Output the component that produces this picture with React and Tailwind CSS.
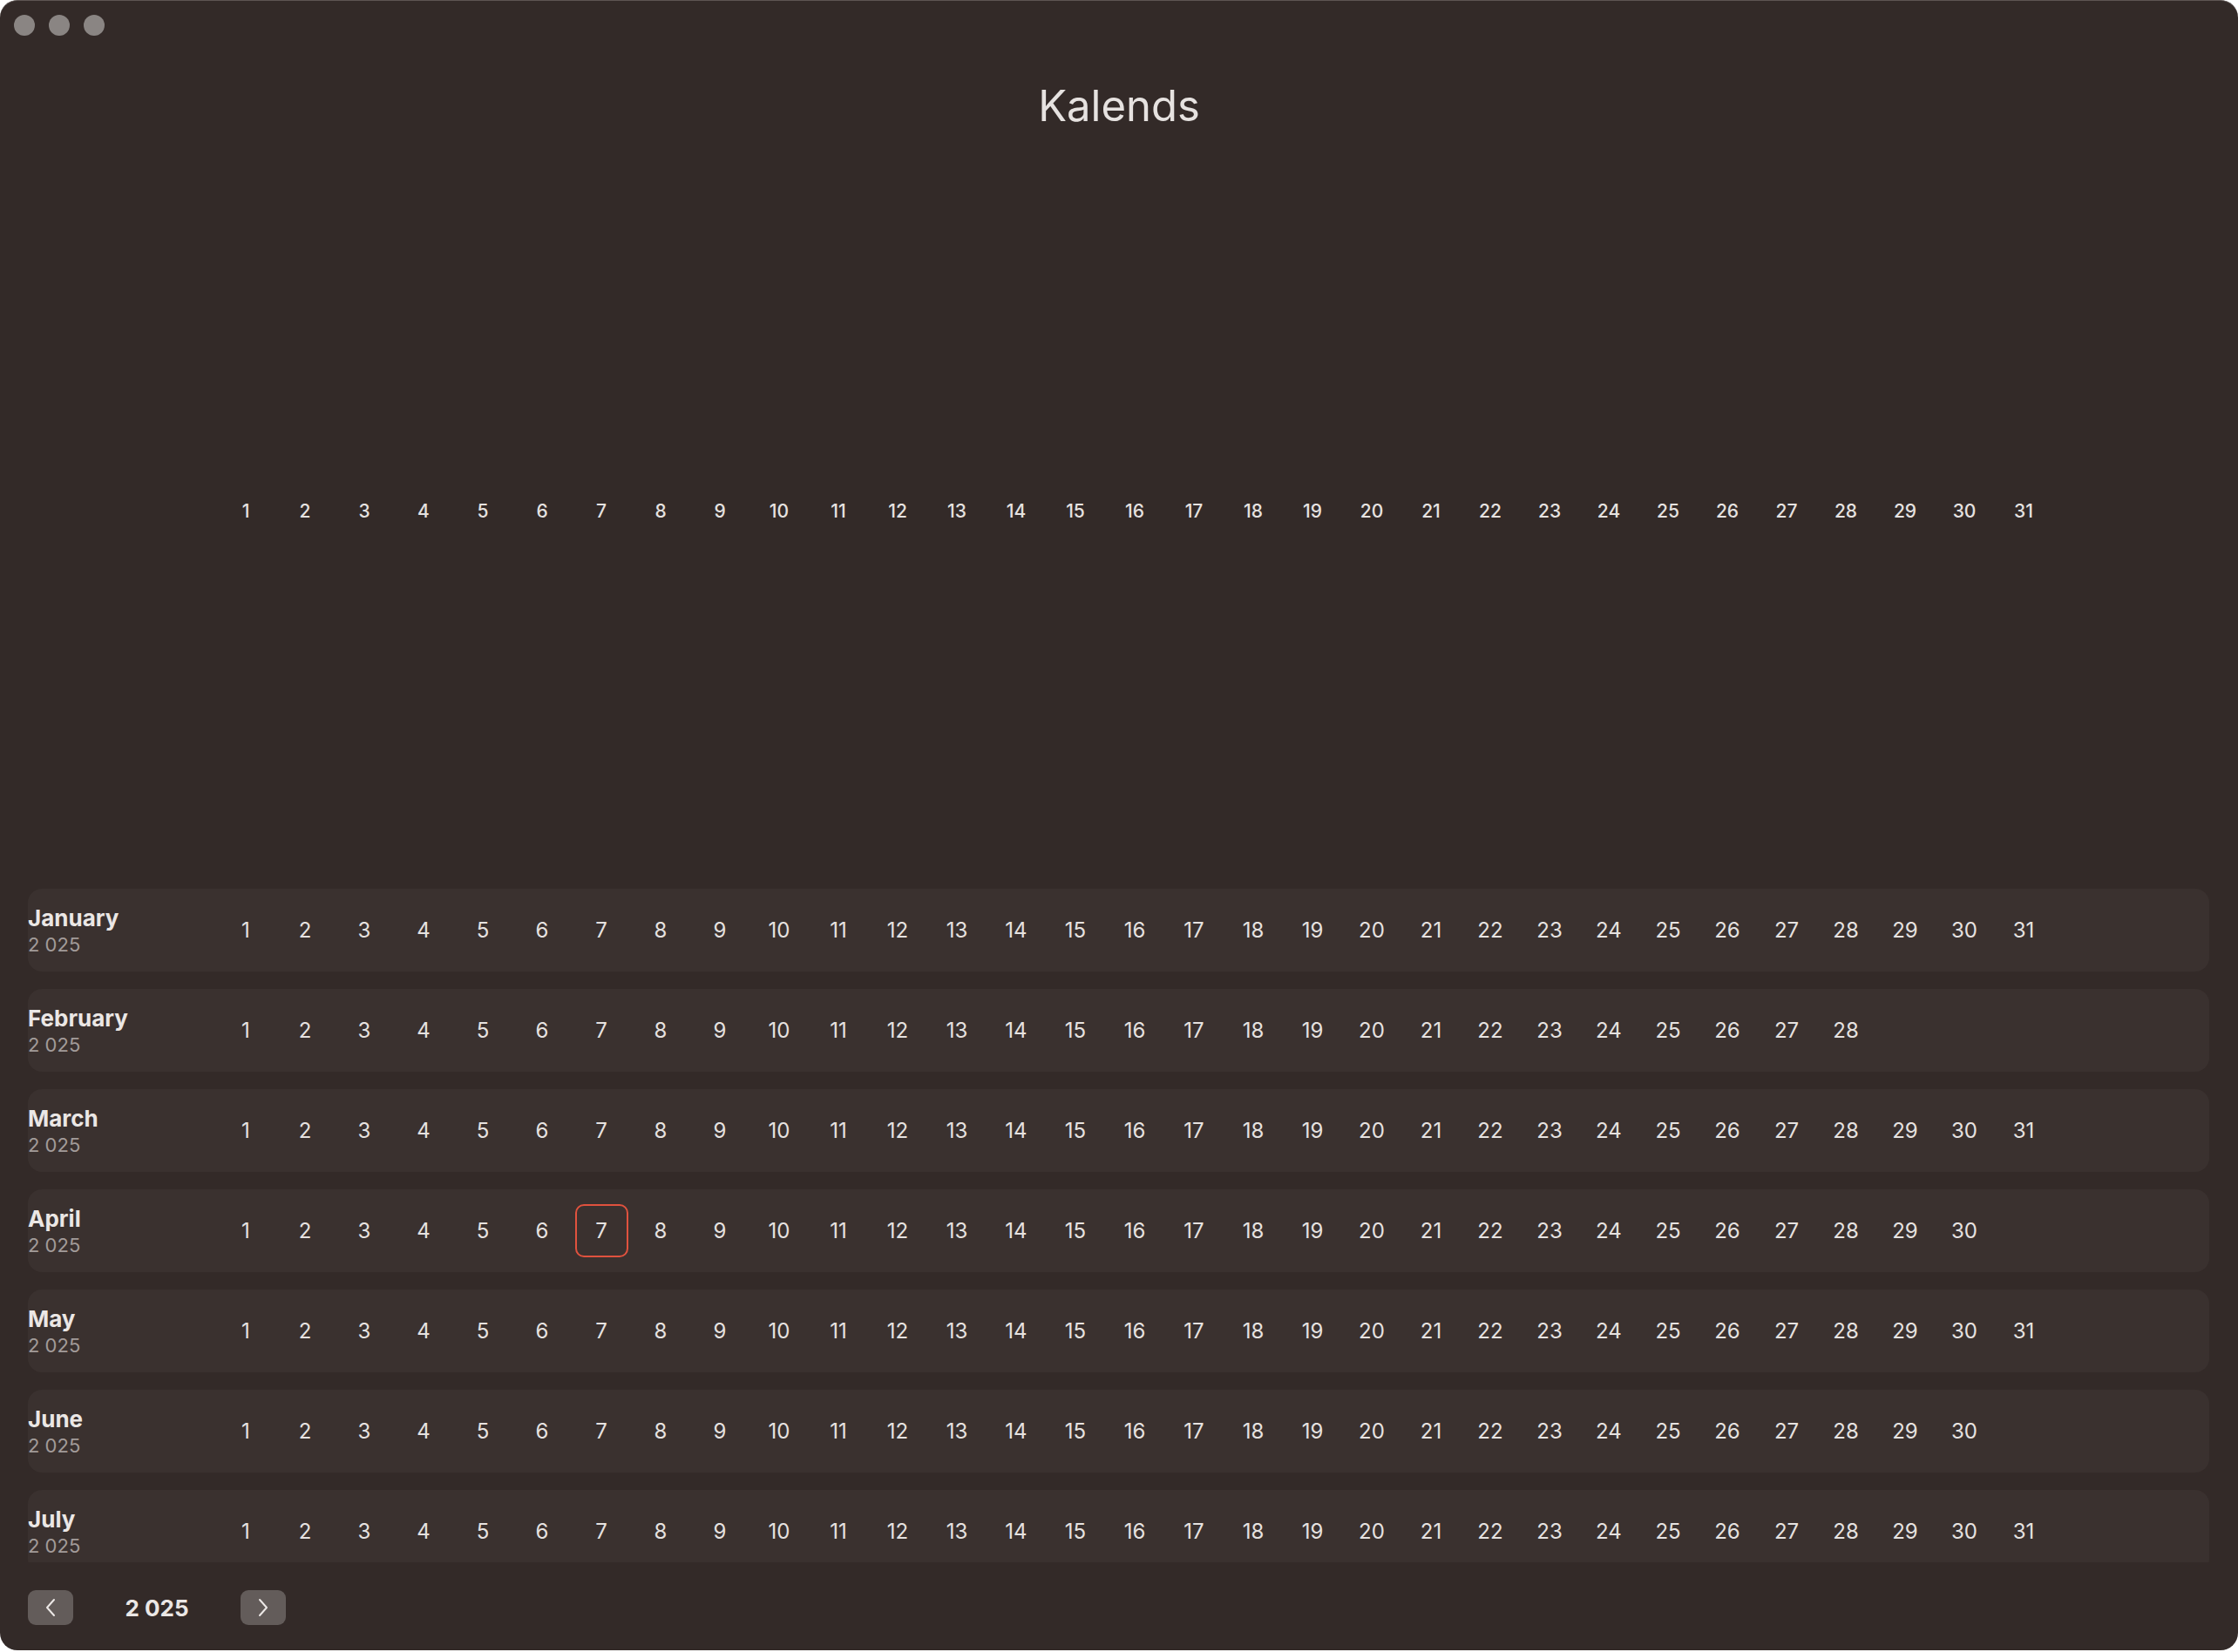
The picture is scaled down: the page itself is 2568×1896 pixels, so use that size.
import React from "react";

const months = [
  { name: "January", days: 31 },
  { name: "February", days: 28 },
  { name: "March", days: 31 },
  { name: "April", days: 30 },
  { name: "May", days: 31 },
  { name: "June", days: 30 },
  { name: "July", days: 31 },
  { name: "August", days: 31 },
];

const range = (n) => Array.from({ length: n }, (_, i) => i + 1);

function Chevron({ dir }) {
  return (
    <svg width="14" height="22" viewBox="0 0 14 22" fill="none">
      <path
        d={dir === "left" ? "M11 2 L3 11 L11 20" : "M3 2 L11 11 L3 20"}
        stroke="#ece8e6"
        strokeWidth="2"
        strokeLinecap="round"
        strokeLinejoin="round"
      />
    </svg>
  );
}

function MonthRow({ month, today }) {
  return (
    <div className="flex items-center h-[95px] shrink-0 rounded-[16px] bg-[#3a312f]">
      <div className="w-[216px] shrink-0 flex flex-col gap-[2px]">
        <span className="text-[26px] leading-[30px] font-bold text-[#ebe7e5]">{month.name}</span>
        <span className="text-[22px] leading-[26px] text-[#a29b99]">2 025</span>
      </div>
      {range(month.days).map((d) => (
        <div key={d} className="w-[68px] shrink-0 flex items-center justify-center">
          {today === d ? (
            <div className="w-[61px] h-[61px] rounded-[10px] border-2 border-[#e0523e] flex items-center justify-center text-[24px] text-[#e6e2e0]">
              {d}
            </div>
          ) : (
            <span className="text-[24px] text-[#e6e2e0]">{d}</span>
          )}
        </div>
      ))}
    </div>
  );
}

export default function App() {
  return (
    <div className="w-[2568px] h-[1896px] bg-white font-['Inter','Noto_Sans',sans-serif]">
      <div className="w-full h-[1894px] rounded-[20px] overflow-hidden bg-[#332a28] border-t border-[#5e5553] flex flex-col">
        {/* window chrome */}
        <div className="h-[55px] shrink-0 flex items-center pl-4 gap-4">
          <div className="w-6 h-6 rounded-full bg-[#8a8583]" />
          <div className="w-6 h-6 rounded-full bg-[#8a8583]" />
          <div className="w-6 h-6 rounded-full bg-[#8a8583]" />
        </div>

        <h1 className="mt-[41px] text-center text-[49px] leading-none text-[#e6e2e0]">Kalends</h1>

        {/* header days */}
        <div className="h-[874px] shrink-0 flex items-center pt-[8px] px-[32px]">
          <div className="flex">
            <div className="w-[216px] shrink-0" />
            {range(31).map((d) => (
              <div key={d} className="w-[68px] shrink-0 text-center text-[21px] font-medium text-[#e6e2e0]">
                {d}
              </div>
            ))}
          </div>
        </div>

        {/* month list */}
        <div className="h-[773px] shrink-0 overflow-hidden flex flex-col gap-[20px] pl-[32px] pr-[33px]">
          {months.map((m) => (
            <MonthRow key={m.name} month={m} today={m.name === "April" ? 7 : null} />
          ))}
        </div>

        {/* footer */}
        <div className="pt-[32px] px-[32px] flex items-center">
          <button className="w-[52px] h-[40px] rounded-[9px] bg-[#635c5a] flex items-center justify-center">
            <Chevron dir="left" />
          </button>
          <span className="w-[192px] text-center text-[26px] font-bold text-[#ebe7e5]">2 025</span>
          <button className="w-[52px] h-[40px] rounded-[9px] bg-[#635c5a] flex items-center justify-center">
            <Chevron dir="right" />
          </button>
        </div>
      </div>
    </div>
  );
}
